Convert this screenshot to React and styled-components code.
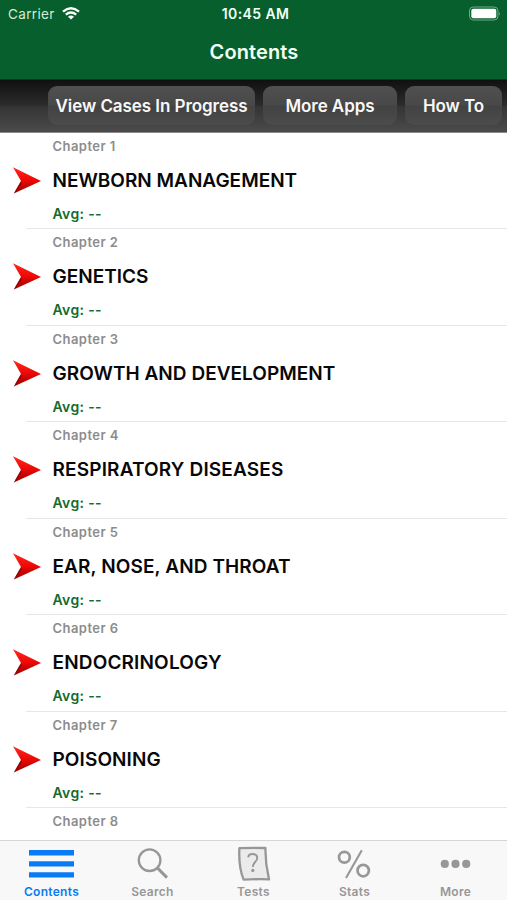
import React from "react";
import styled, { createGlobalStyle } from "styled-components";

const GlobalStyle = createGlobalStyle`
  * { box-sizing: border-box; }
  html, body { margin: 0; padding: 0; overflow: hidden; }
  body { font-family: Inter, "Liberation Sans", sans-serif; background: #fff; }
`;

const Screen = styled.div`
  display: flex;
  flex-direction: column;
  width: 507px;
  height: 900px;
  overflow: hidden;
  background: #fff;
`;

const Header = styled.header`
  height: 80px;
  flex: none;
  background: #065f2d;
  border-bottom: 1px solid #073b1d;
  color: #f4fff4;
`;

const StatusBar = styled.div`
  display: grid;
  grid-template-columns: 1fr auto 1fr;
  align-items: center;
  height: 27px;
  padding: 0 6px 0 8px;
`;

const Carrier = styled.span`
  display: flex;
  align-items: center;
  gap: 7px;
  font-size: 13.5px;
  letter-spacing: 0.35px;
  color: #d5ecd9;
`;

const Clock = styled.span`
  padding-left: 2px;
  font-size: 14px;
  font-weight: 600;
  letter-spacing: 0.4px;
`;

const BatterySlot = styled.span`
  display: flex;
  justify-content: flex-end;
`;

const Heading = styled.h1`
  margin: 0;
  height: 51px;
  line-height: 50px;
  padding-left: 1px;
  text-align: center;
  font-size: 20px;
  font-weight: 600;
  letter-spacing: 0.12px;
`;

const Toolbar = styled.nav`
  display: flex;
  flex: none;
  justify-content: flex-end;
  gap: 8px;
  height: 53px;
  padding: 6px 5px 0 0;
  background: linear-gradient(#101010, #2c2c2c 49%, #343434 51%, #4b4b4b);
  border-bottom: 1px solid #8a8a8a;
`;

const ToolButton = styled.button`
  width: ${(p) => p.$width}px;
  height: 39px;
  padding: 1px 0 0;
  border: 0;
  border-radius: 9px;
  background: linear-gradient(#505050, #484848 49%, #424242 51%, #4c4c4c);
  color: #f8f8f8;
  font: 600 17px Inter, sans-serif;
  letter-spacing: ${(p) => p.$tracking}px;
  white-space: nowrap;
`;

const List = styled.main`
  flex: 1;
  min-height: 0;
  margin-top: -0.1px;
  overflow: hidden;
`;

const Row = styled.article`
  display: grid;
  grid-template-columns: 52.5px 1fr;
  height: 96.5px;
  background: linear-gradient(#e6e6e8, #e6e6e8) 26px 100% / 481px 1px no-repeat;
`;

const ArrowSlot = styled.span`
  padding: 33px 0 0 12px;
`;

const RowText = styled.div`
  display: flex;
  flex-direction: column;
  white-space: nowrap;
`;

const Chapter = styled.span`
  height: 26px;
  line-height: 26px;
  font-size: 13px;
  font-weight: 600;
  letter-spacing: 0.45px;
  color: #8c8c8c;
`;

const Title = styled.h2`
  margin: 0;
  height: 42px;
  line-height: 43px;
  font-size: 19px;
  font-weight: 600;
  letter-spacing: ${(p) => p.$tracking}px;
  color: #080808;
`;

const Average = styled.span`
  height: 26px;
  line-height: 26px;
  font-size: 14px;
  font-weight: 600;
  letter-spacing: 0.35px;
  color: #146b2c;
`;

const TabBar = styled.footer`
  display: grid;
  grid-template-columns: repeat(5, 1fr);
  flex: none;
  height: 60px;
  padding: 0 1px;
  background: #f8f8f8;
  border-top: 1px solid #d6d6d6;
`;

const Tab = styled.a`
  display: flex;
  flex-direction: column;
  align-items: center;
  color: ${(p) => (p.$active ? "#087bf5" : "#979797")};
  svg { display: block; margin-top: 0.5px; }
`;

const TabLabel = styled.span`
  margin-top: 1.5px;
  line-height: 16px;
  font-size: 12px;
  font-weight: 600;
  letter-spacing: 0.3px;
`;

const WifiIcon = () => (
  <svg width="18" height="13" viewBox="0 0 18 13" fill="none" stroke="#fff" strokeWidth="2.3">
    <path d="M1 4.6Q9-2.1 17 4.6M3.8 7.6Q9 3.4 14.2 7.6" />
    <path d="M6 9.7Q9 7.2 12 9.7L9 12.6Z" fill="#fff" stroke="none" />
  </svg>
);

const BatteryIcon = () => (
  <svg width="33" height="15" viewBox="0 0 33 15">
    <rect x="1.5" y="1" width="28.5" height="13" rx="3.8" fill="none" stroke="#78a889" />
    <rect x="3.3" y="2.8" width="25" height="9.4" rx="2" fill="#fff" />
    <path d="M31.3 5.5q1.3 2 0 4Z" fill="#8eb69b" />
  </svg>
);

const Arrow = () => (
  <svg width="30" height="29" viewBox="0 0 30 29">
    <defs>
      <linearGradient id="arrowRed" x1="0" y1="0" x2="0" y2="1">
        <stop stopColor="#ff2820" />
        <stop offset=".5" stopColor="#ed0806" />
        <stop offset="1" stopColor="#980000" />
      </linearGradient>
    </defs>
    <path d="M1 1.3L29 15L1.8 27.4L9 15Z" fill="url(#arrowRed)" />
    <path d="M1.8 27.4L9 15L10 17.5Z" fill="#680d0d" opacity=".65" />
  </svg>
);

const icons = {
  Contents: <path d="M3 10.7H48M3 21.9H48M3 32.9H48" strokeWidth="5.4" />,
  Search: (
    <g strokeWidth="2.3">
      <circle cx="22.6" cy="18.2" r="10.8" />
      <path d="M30.8 26.4L40 35.6" strokeWidth="3" />
    </g>
  ),
  Tests: (
    <g strokeWidth="2.3" strokeLinejoin="round">
      <path d="M11.4 6.2Q24 5.5 37.4 6Q37.2 21.6 41 37.3Q28 36.9 15.6 37.7Q10.4 24.6 11.4 6.2Z" fill="#ebebeb" />
      <path d="M20.2 15.4C20.4 11 29.2 10.7 29.2 15.9C29.2 20 24.8 20.1 24.8 25" strokeWidth="1.9" />
      <circle cx="24.8" cy="28.4" r="1.6" fill="currentColor" stroke="none" />
    </g>
  ),
  Stats: (
    <g strokeWidth="2.7">
      <circle cx="15.4" cy="15.3" r="5.4" />
      <circle cx="34.2" cy="28.6" r="5.7" />
      <path d="M32.8 8.3L17 35.9" strokeWidth="2.1" />
    </g>
  ),
  More: (
    <g fill="currentColor" stroke="none">
      <circle cx="14.8" cy="21.9" r="4.1" />
      <circle cx="25.5" cy="21.9" r="4.1" />
      <circle cx="36.2" cy="21.9" r="4.1" />
    </g>
  ),
};

const chapters = [
  ["NEWBORN MANAGEMENT", 0],
  ["GENETICS", 0],
  ["GROWTH AND DEVELOPMENT", 0.03],
  ["RESPIRATORY DISEASES", 0.16],
  ["EAR, NOSE, AND THROAT", 0.11],
  ["ENDOCRINOLOGY", 0.16],
  ["POISONING", 0.1],
];

export default function App() {
  return (
    <Screen>
      <GlobalStyle />
      <Header>
        <StatusBar>
          <Carrier>Carrier <WifiIcon /></Carrier>
          <Clock>10:45 AM</Clock>
          <BatterySlot><BatteryIcon /></BatterySlot>
        </StatusBar>
        <Heading>Contents</Heading>
      </Header>
      <Toolbar>
        <ToolButton $width={207} $tracking={-0.06}>View Cases In Progress</ToolButton>
        <ToolButton $width={134} $tracking={-0.06}>More Apps</ToolButton>
        <ToolButton $width={97} $tracking={-0.1}>How To</ToolButton>
      </Toolbar>
      <List>
        {chapters.map(([title, tracking], i) => (
          <Row key={title}>
            <ArrowSlot><Arrow /></ArrowSlot>
            <RowText>
              <Chapter>Chapter {i + 1}</Chapter>
              <Title $tracking={tracking}>{title}</Title>
              <Average>Avg: --</Average>
            </RowText>
          </Row>
        ))}
        <Row>
          <span />
          <RowText><Chapter>Chapter 8</Chapter></RowText>
        </Row>
      </List>
      <TabBar>
        {Object.entries(icons).map(([name, drawing]) => (
          <Tab key={name} $active={name === "Contents"}>
            <svg width="51" height="41" viewBox="0 0 51 41" fill="none" stroke="currentColor">{drawing}</svg>
            <TabLabel>{name}</TabLabel>
          </Tab>
        ))}
      </TabBar>
    </Screen>
  );
}
